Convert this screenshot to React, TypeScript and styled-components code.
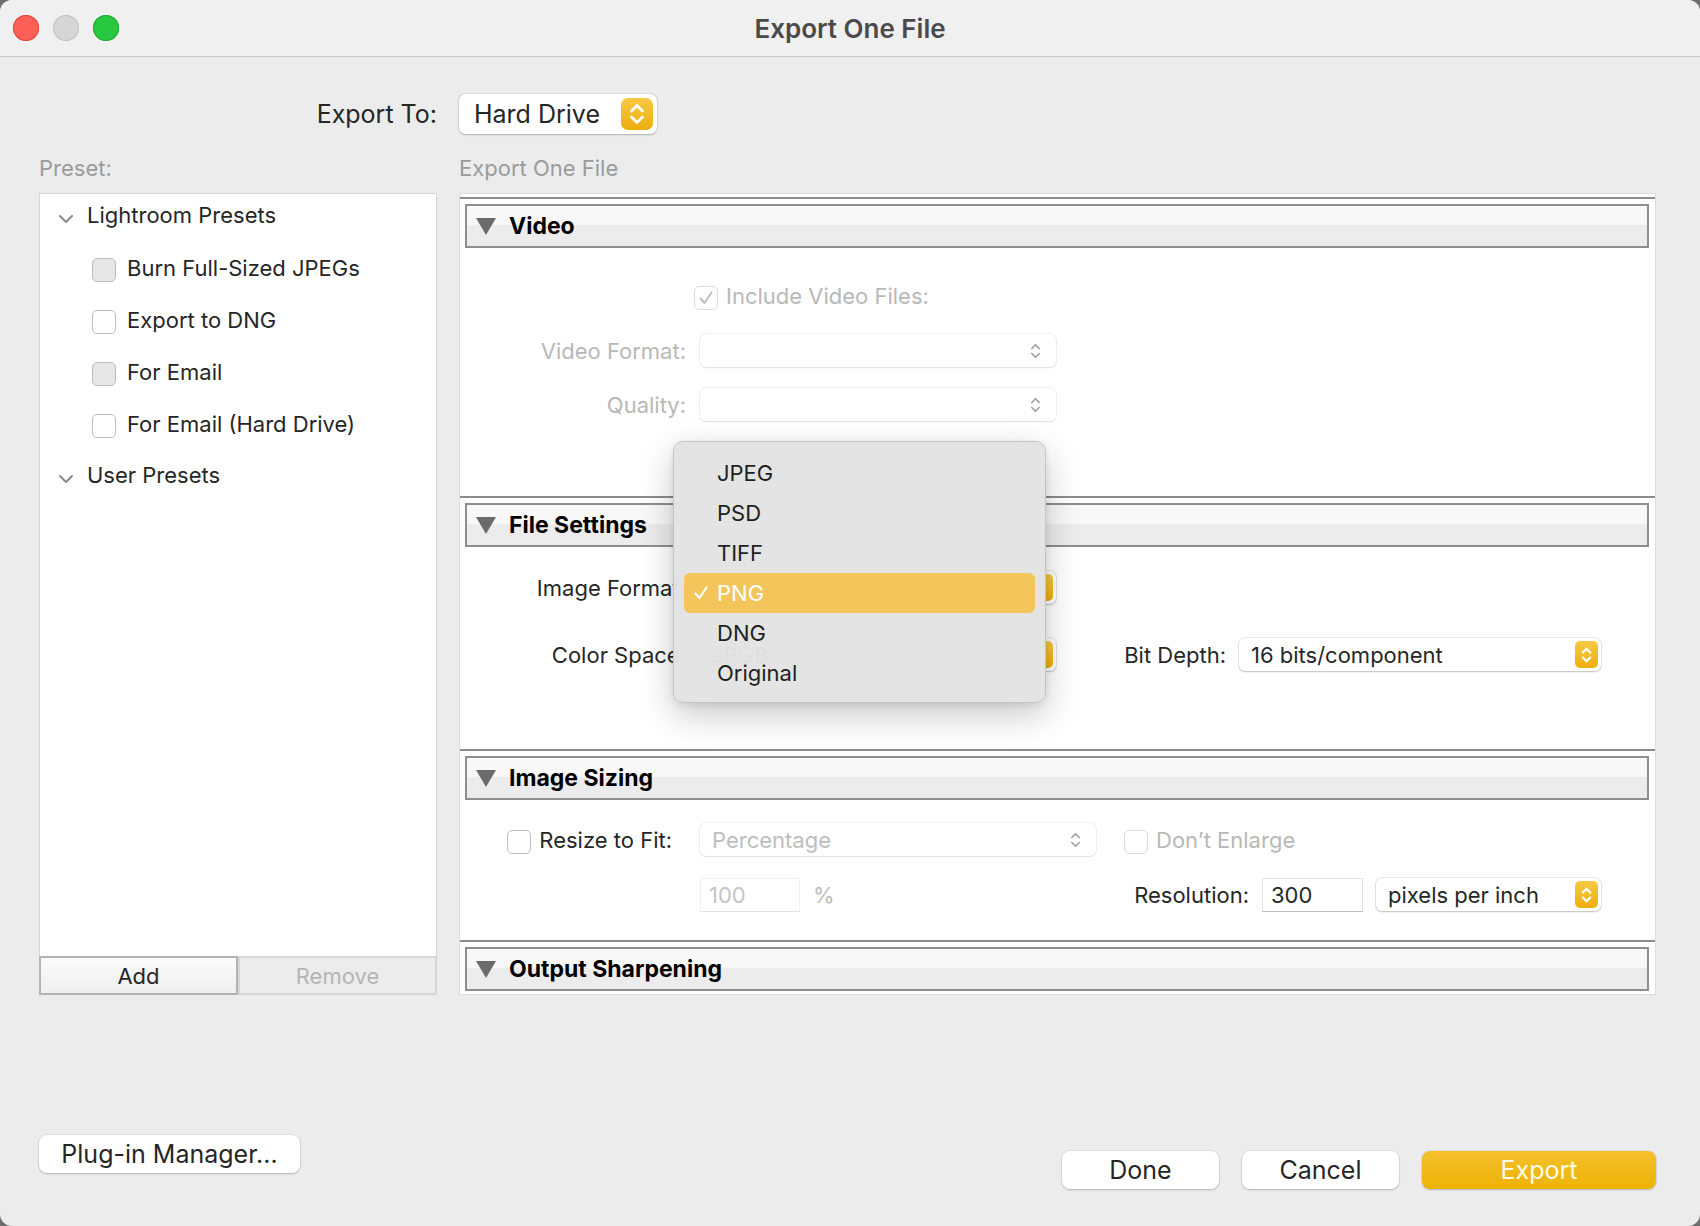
import styled, { createGlobalStyle } from 'styled-components';

const GlobalStyle = createGlobalStyle`
	html, body {
		margin: 0;
		padding: 0;
		background: #6e6e6e;
	}
	body {
		font-family: Inter, 'Noto Sans', sans-serif;
		color: #262626;
		-webkit-font-smoothing: antialiased;
	}
	* {
		box-sizing: border-box;
	}
`;

const Window = styled.div`
	width: 1700px;
	height: 1226px;
	background: #ececec;
	border-radius: 12px;
	overflow: hidden;
	display: flex;
	flex-direction: column;
`;

const TitleBar = styled.header`
	height: 57px;
	flex: none;
	background: #f0f0f0;
	border-bottom: 1px solid #c9c9c9;
	display: grid;
	grid-template-columns: 1fr auto 1fr;
	align-items: center;
	padding: 0 13px;
`;

const Lights = styled.div`
	display: flex;
	gap: 14px;
`;

const Light = styled.span<{ $color: string; $edge: string }>`
	width: 26px;
	height: 26px;
	border-radius: 50%;
	background: ${p => p.$color};
	box-shadow: inset 0 0 0 1px ${p => p.$edge};
`;

const Title = styled.h1`
	margin: 0;
	font-size: 26px;
	font-weight: 600;
	color: #4a4a4a;
`;

const Body = styled.main`
	flex: 1;
	display: flex;
	flex-direction: column;
	padding: 37px 44px 0 39px;
`;

const Columns = styled.div`
	display: grid;
	grid-template-columns: 398px 1197px;
	column-gap: 22px;
`;

const ExportLabel = styled.span`
	justify-self: end;
	align-self: center;
	font-size: 25px;
	color: #262626;
`;

const Caption = styled.span`
	margin: 21px 0 12px;
	height: 26px;
	line-height: 26px;
	font-size: 22px;
	color: #9b9b9b;
`;

const PresetPanel = styled.div`
	height: 802px;
	background: #fff;
	border: 1px solid #d6d6d6;
	display: flex;
	flex-direction: column;
`;

const Tree = styled.ul`
	flex: 1;
	list-style: none;
	margin: 0;
	padding: 0;
`;

const GroupRow = styled.li<{ $height: number }>`
	height: ${p => p.$height}px;
	display: flex;
	align-items: center;
	gap: 12px;
	padding-left: 17px;
	font-size: 22px;
`;

const ItemRow = styled.li<{ $first?: boolean }>`
	height: 52px;
	margin-top: ${p => (p.$first ? 6 : 0)}px;
	display: flex;
	align-items: center;
	gap: 11px;
	padding-left: 52px;
	font-size: 22px;
`;

const Check = styled.span<{ $filled?: boolean; $disabled?: boolean }>`
	flex: none;
	width: 24px;
	height: 24px;
	border-radius: 5px;
	background: ${p => (p.$filled ? '#e7e7e7' : '#fff')};
	border: 1px solid ${p => (p.$disabled ? '#dcdcdc' : '#bdbdbd')};
	display: grid;
	place-items: center;
	margin-top: 4px;
`;

const ButtonBar = styled.div`
	height: 39px;
	display: grid;
	grid-template-columns: 1fr 1fr;
	margin: 0 -1px -1px;
`;

const BarButton = styled.button<{ $disabled?: boolean }>`
	font: inherit;
	font-size: 22px;
	color: ${p => (p.$disabled ? '#b5b5b5' : '#262626')};
	background: ${p => (p.$disabled ? '#ececec' : 'linear-gradient(#fbfbfb, #efefef)')};
	border: 2px solid ${p => (p.$disabled ? '#d6d6d6' : '#b3b3b3')};
	padding: 0;
`;

const SettingsPanel = styled.div`
	position: relative;
	height: 802px;
	background: #fff;
	border: 1px solid #dedede;
	padding-top: 3px;
	display: flex;
	flex-direction: column;
`;

const Divider = styled.div`
	height: 2px;
	flex: none;
	background: #8c8c8c;
`;

const SectionHeader = styled.div`
	flex: none;
	height: 44px;
	margin: 5px 6px 0 5px;
	border: 2px solid #8e8e8e;
	background: linear-gradient(#f8f8f8 0 48%, #ececec 48% 100%);
	display: flex;
	align-items: center;
	gap: 13px;
	padding-left: 9px;
	font-size: 23px;
	font-weight: 700;
	color: #000;
`;

const SectionBody = styled.div<{ $height: number; $top: number; $gap: number }>`
	flex: none;
	height: ${p => p.$height}px;
	padding: ${p => p.$top}px 54px 0 0;
	display: flex;
	flex-direction: column;
	gap: ${p => p.$gap}px;
`;

const FormRow = styled.div<{ $tall?: boolean }>`
	height: ${p => (p.$tall ? 34 : 33)}px;
	display: flex;
	align-items: center;
`;

const Label = styled.span<{ $disabled?: boolean; $after?: number }>`
	width: ${p => 240 - (p.$after ?? 14)}px;
	flex: none;
	margin-right: ${p => p.$after ?? 14}px;
	text-align: right;
	display: flex;
	justify-content: flex-end;
	align-items: center;
	gap: 8px;
	font-size: 22px;
	color: ${p => (p.$disabled ? '#b8b8b8' : '#262626')};
`;

const InlineLabel = styled.span<{ $disabled?: boolean; $shift?: number }>`
	display: flex;
	align-items: center;
	gap: 8px;
	margin-left: ${p => p.$shift ?? 0}px;
	font-size: 22px;
	color: ${p => (p.$disabled ? '#b8b8b8' : '#262626')};
`;

const Group = styled.div`
	margin-left: auto;
	display: flex;
	align-items: center;
	gap: 13px;
`;

const Popup = styled.div<{ $width: number; $disabled?: boolean; $big?: boolean }>`
	width: ${p => p.$width}px;
	height: ${p => (p.$big ? 40 : 33)}px;
	flex: none;
	background: #fff;
	border-radius: ${p => (p.$big ? 7 : 6)}px;
	box-shadow: 0 0 0 1px rgba(0, 0, 0, ${p => (p.$disabled ? 0.05 : 0.08)}),
		0 1px 2px rgba(0, 0, 0, ${p => (p.$disabled ? 0.08 : 0.18)});
	display: flex;
	align-items: center;
	justify-content: space-between;
	padding: 0 ${p => (p.$big ? 4 : 3)}px 0 ${p => (p.$big ? 15 : 12)}px;
	font-size: ${p => (p.$big ? 25 : 22)}px;
	color: ${p => (p.$disabled ? '#bdbdbd' : '#262626')};
`;

const Stepper = styled.span<{ $accent?: boolean; $big?: boolean }>`
	flex: none;
	width: ${p => (p.$big ? 32 : 23)}px;
	height: ${p => (p.$big ? 32 : 27)}px;
	border-radius: ${p => (p.$big ? 7 : 5)}px;
	background: ${p => (p.$accent ? 'linear-gradient(#f7c945, #eeae0c)' : 'transparent')};
	display: grid;
	place-items: center;
	margin-right: ${p => (p.$accent ? 0 : 6)}px;
`;

const Field = styled.span<{ $width: number; $disabled?: boolean }>`
	width: ${p => p.$width}px;
	height: 34px;
	flex: none;
	display: flex;
	align-items: center;
	padding-left: 8px;
	font-size: 22px;
	background: #fff;
	border: 1px solid ${p => (p.$disabled ? '#f0f0f0' : '#e2e2e2')};
	border-bottom-color: ${p => (p.$disabled ? '#e2e2e2' : '#bdbdbd')};
	color: ${p => (p.$disabled ? '#c4c4c4' : '#262626')};
`;

const Unit = styled.span`
	margin-left: 13px;
	font-size: 22px;
	color: #bdbdbd;
`;

const Menu = styled.ul`
	position: absolute;
	left: 213px;
	top: 247px;
	width: 373px;
	height: 262px;
	margin: 0;
	padding: 11px 10px 0;
	list-style: none;
	background: rgba(227, 227, 227, 0.98);
	border: 1px solid #c4c4c4;
	border-radius: 10px;
	box-shadow: 0 12px 34px rgba(0, 0, 0, 0.22), 0 2px 6px rgba(0, 0, 0, 0.08);
`;

const MenuItem = styled.li<{ $active?: boolean }>`
	height: 40px;
	display: flex;
	align-items: center;
	padding-left: 8px;
	gap: 7px;
	border-radius: 6px;
	font-size: 22px;
	background: ${p => (p.$active ? '#f3c55b' : 'transparent')};
	color: ${p => (p.$active ? '#fff' : '#1f1f1f')};
`;

const Tick = styled.span`
	width: 18px;
	display: grid;
	place-items: center;
`;

const Footer = styled.footer`
	margin-top: 140px;
	display: flex;
	justify-content: space-between;
	align-items: flex-start;
`;

const Actions = styled.div`
	margin-top: 16px;
	display: flex;
	gap: 23px;
`;

const PushButton = styled.button<{ $width: number; $primary?: boolean }>`
	width: ${p => p.$width}px;
	height: 38px;
	padding: 0;
	border: none;
	border-radius: 8px;
	font-family: inherit;
	font-size: 25px;
	color: ${p => (p.$primary ? '#fffbe6' : '#262626')};
	background: ${p => (p.$primary ? 'linear-gradient(#f4c02c, #edb307)' : '#fff')};
	box-shadow: 0 0 0 1px rgba(0, 0, 0, 0.05), 0 1px 2px rgba(0, 0, 0, 0.2);
`;

const Updown = ({ color, big, bold }: { color: string; big?: boolean; bold?: boolean }) =>
	big ? (
		<svg width='16' height='24' viewBox='0 0 16 24' fill='none'>
			<path d='M2.5 9 L8 3.5 L13.5 9 M2.5 15 L8 20.5 L13.5 15' stroke={color} strokeWidth='2.8' strokeLinecap='round' strokeLinejoin='round' />
		</svg>
	) : (
		<svg width='11' height='18' viewBox='0 0 11 18' fill='none'>
			<path d='M1.8 6.5 L5.5 2.8 L9.2 6.5 M1.8 11.5 L5.5 15.2 L9.2 11.5' stroke={color} strokeWidth={bold ? 2.3 : 1.6} strokeLinecap='round' strokeLinejoin='round' />
		</svg>
	);

const Triangle = () => (
	<svg width='20' height='17' viewBox='0 0 20 17'>
		<path d='M0 0 H20 L10 17 Z' fill='#6b6b6b' />
	</svg>
);

const Chevron = () => (
	<svg width='18' height='12' viewBox='0 0 18 12' fill='none' style={{ marginTop: 8 }}>
		<path d='M3 3 L9 9 L15 3' stroke='#8a8a8a' strokeWidth='2' strokeLinecap='round' strokeLinejoin='round' />
	</svg>
);

const CheckMark = ({ color }: { color: string }) => (
	<svg width='16' height='16' viewBox='0 0 16 16' fill='none'>
		<path d='M2.5 8.5 L6.5 13 L13.5 2.5' stroke={color} strokeWidth='2.2' strokeLinecap='round' strokeLinejoin='round' />
	</svg>
);

const AccentStepper = () => (
	<Stepper $accent>
		<Updown color='#fff' bold />
	</Stepper>
);

const PlainStepper = () => (
	<Stepper>
		<Updown color='#9c9c9c' />
	</Stepper>
);

const presets = [
	{ name: 'Burn Full-Sized JPEGs', filled: true },
	{ name: 'Export to DNG', filled: false },
	{ name: 'For Email', filled: true },
	{ name: 'For Email (Hard Drive)', filled: false },
];

const formats = ['JPEG', 'PSD', 'TIFF', 'PNG', 'DNG', 'Original'];

const App = () => {
	return (
		<>
			<GlobalStyle />
			<Window>
				<TitleBar>
					<Lights>
						<Light $color='#fe5f57' $edge='#e2463f' />
						<Light $color='#d6d6d6' $edge='#c4c4c4' />
						<Light $color='#28c840' $edge='#1eaa32' />
					</Lights>
					<Title>Export One File</Title>
					<span />
				</TitleBar>
				<Body>
					<Columns>
						<ExportLabel>Export To:</ExportLabel>
						<Popup $width={198} $big>
							Hard Drive
							<Stepper $accent $big>
								<Updown color='#fff' big />
							</Stepper>
						</Popup>

						<Caption>Preset:</Caption>
						<Caption>Export One File</Caption>

						<PresetPanel>
							<Tree>
								<GroupRow $height={42}>
									<Chevron />
									Lightroom Presets
								</GroupRow>
								{presets.map((preset, index) => (
									<ItemRow key={preset.name} $first={index === 0}>
										<Check $filled={preset.filled} />
										{preset.name}
									</ItemRow>
								))}
								<GroupRow $height={50}>
									<Chevron />
									User Presets
								</GroupRow>
							</Tree>
							<ButtonBar>
								<BarButton>Add</BarButton>
								<BarButton $disabled>Remove</BarButton>
							</ButtonBar>
						</PresetPanel>

						<SettingsPanel>
							<Divider />
							<SectionHeader>
								<Triangle />
								Video
							</SectionHeader>
							<SectionBody $height={248} $top={31} $gap={21}>
								<FormRow $tall>
									<Label />
									<InlineLabel $disabled $shift={-6}>
										<Check $disabled>
											<CheckMark color='#c2c2c2' />
										</Check>
										Include Video Files:
									</InlineLabel>
								</FormRow>
								<FormRow>
									<Label $disabled>Video Format:</Label>
									<Popup $width={356} $disabled>
										<span />
										<PlainStepper />
									</Popup>
								</FormRow>
								<FormRow>
									<Label $disabled>Quality:</Label>
									<Popup $width={356} $disabled>
										<span />
										<PlainStepper />
									</Popup>
								</FormRow>
							</SectionBody>

							<Divider />
							<SectionHeader>
								<Triangle />
								File Settings
							</SectionHeader>
							<SectionBody $height={202} $top={24} $gap={34}>
								<FormRow>
									<Label>Image Format:</Label>
									<Popup $width={356}>
										PNG
										<AccentStepper />
									</Popup>
								</FormRow>
								<FormRow>
									<Label>Color Space:</Label>
									<Popup $width={356}>
										sRGB
										<AccentStepper />
									</Popup>
									<Group>
										<InlineLabel>Bit Depth:</InlineLabel>
										<Popup $width={362}>
											16 bits/component
											<AccentStepper />
										</Popup>
									</Group>
								</FormRow>
							</SectionBody>

							<Divider />
							<SectionHeader>
								<Triangle />
								Image Sizing
							</SectionHeader>
							<SectionBody $height={140} $top={23} $gap={22}>
								<FormRow>
									<Label $after={28}>
										<Check />
										Resize to Fit:
									</Label>
									<Popup $width={396} $disabled>
										Percentage
										<PlainStepper />
									</Popup>
									<InlineLabel $disabled $shift={28}>
										<Check $disabled />
										Don’t Enlarge
									</InlineLabel>
								</FormRow>
								<FormRow>
									<Label />
									<Field $width={100} $disabled>
										100
									</Field>
									<Unit>%</Unit>
									<Group>
										<InlineLabel>Resolution:</InlineLabel>
										<Field $width={101}>300</Field>
										<Popup $width={225}>
											pixels per inch
											<AccentStepper />
										</Popup>
									</Group>
								</FormRow>
							</SectionBody>

							<Divider />
							<SectionHeader>
								<Triangle />
								Output Sharpening
							</SectionHeader>

							<Menu>
								{formats.map(format => (
									<MenuItem key={format} $active={format === 'PNG'}>
										<Tick>{format === 'PNG' && <CheckMark color='#fff' />}</Tick>
										{format}
									</MenuItem>
								))}
							</Menu>
						</SettingsPanel>
					</Columns>

					<Footer>
						<PushButton $width={261}>Plug-in Manager...</PushButton>
						<Actions>
							<PushButton $width={157}>Done</PushButton>
							<PushButton $width={157}>Cancel</PushButton>
							<PushButton $width={234} $primary>
								Export
							</PushButton>
						</Actions>
					</Footer>
				</Body>
			</Window>
		</>
	);
};

export default App;
